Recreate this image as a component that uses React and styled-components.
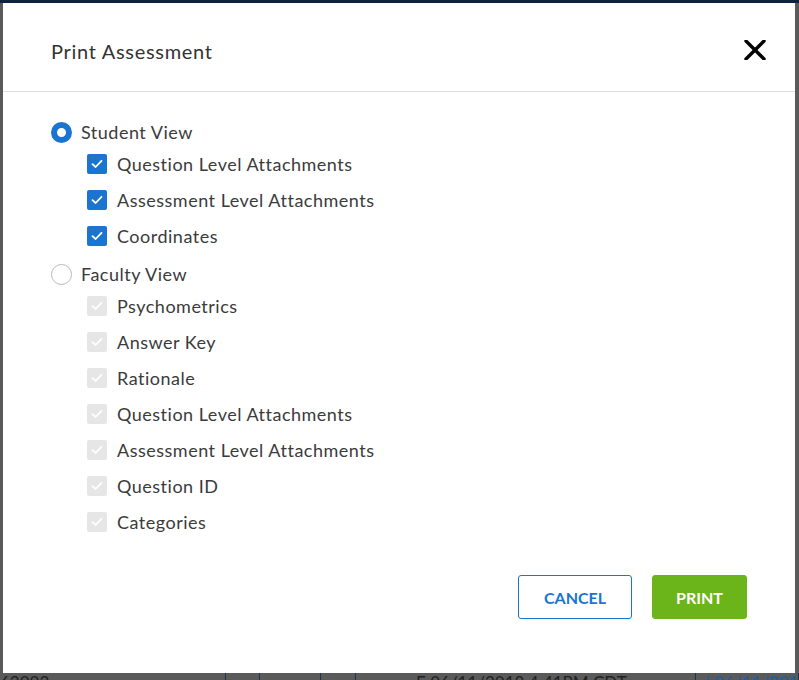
import styled, { createGlobalStyle } from "styled-components";

const GlobalStyle = createGlobalStyle`
  html, body {
    margin: 0;
    padding: 0;
    background: #5a5a5a;
  }
  body {
    font-family: "Lato", "Open Sans", sans-serif;
  }
`;

const Page = styled.div`
  width: 799px;
  height: 680px;
  position: relative;
  overflow: hidden;
  background: #5a5a5a;
  display: flex;
  flex-direction: column;
`;

const TopBar = styled.div`
  height: 3px;
  background: #0d2340;
`;

const TableRow = styled.div`
  margin-top: auto;
  height: 7px;
  display: flex;
  overflow: hidden;
`;

const Cell = styled.div`
  width: ${(p) => p.$width}px;
  box-sizing: border-box;
  border-right: 1px solid #1d3350;
  color: ${(p) => p.$color || "#222"};
  font-size: 17px;
  line-height: 18px;
  padding-top: 1px;
  padding-left: ${(p) => p.$pad || 0}px;
  white-space: nowrap;
  overflow: hidden;
`;

const Modal = styled.section`
  position: absolute;
  top: 3px;
  left: 3px;
  width: 792px;
  height: 670px;
  background: #fff;
  display: flex;
  flex-direction: column;
`;

const Header = styled.header`
  height: 88px;
  border-bottom: 1px solid #dedede;
  display: flex;
  align-items: center;
  justify-content: space-between;
  padding: 0 28px 0 48px;
`;

const Title = styled.h2`
  margin: 8px 0 0;
  font-size: 20px;
  font-weight: 400;
  letter-spacing: 0.7px;
  color: #333;
`;

const CloseButton = styled.button`
  all: unset;
  cursor: pointer;
  width: 24px;
  height: 24px;
  display: flex;
  align-items: center;
  justify-content: center;
  margin-top: 6px;
`;

const Body = styled.div`
  padding: 26px 48px 0;
  display: flex;
  flex-direction: column;
  gap: 6px;
`;

const Group = styled.div`
  display: flex;
  flex-direction: column;
`;

const RadioRow = styled.label`
  height: 28px;
  display: flex;
  align-items: center;
  gap: 9px;
  font-size: 18px;
  letter-spacing: 0.5px;
  color: #3b3b3b;
`;

const Radio = styled.span`
  box-sizing: border-box;
  width: 21px;
  height: 21px;
  border-radius: 50%;
  border: ${(p) => (p.$checked ? "6.5px solid #1b75d0" : "1px solid #b8b8b8")};
  background: #fff;
`;

const CheckRow = styled.label`
  height: 36px;
  display: flex;
  align-items: center;
  gap: 10px;
  padding-left: 36px;
  font-size: 18px;
  letter-spacing: 0.5px;
  color: #3b3b3b;
`;

const Box = styled.span`
  width: 20px;
  height: 20px;
  border-radius: 2px;
  background: ${(p) => (p.$disabled ? "#e6e6e6" : "#1b75d0")};
  display: flex;
  align-items: center;
  justify-content: center;
`;

const Footer = styled.footer`
  margin-top: 35px;
  padding: 0 48px;
  display: flex;
  justify-content: flex-end;
  gap: 20px;
`;

const Button = styled.button`
  all: unset;
  box-sizing: border-box;
  height: 44px;
  border-radius: 3px;
  display: flex;
  align-items: center;
  justify-content: center;
  font-family: "Lato", "Open Sans", sans-serif;
  font-size: 16px;
  font-weight: 700;
  cursor: pointer;
  width: ${(p) => p.$width}px;
  color: ${(p) => (p.$primary ? "#fff" : "#1b75d0")};
  background: ${(p) => (p.$primary ? "#6bb41a" : "#fff")};
  border: 1px solid ${(p) => (p.$primary ? "#6bb41a" : "#1b75d0")};
`;

const Check = () => (
  <svg width="12" height="10" viewBox="0 0 12 10">
    <polyline
      points="1.5,5.2 4.6,8 10.5,1.8"
      fill="none"
      stroke="#fff"
      strokeWidth="1.8"
      strokeLinecap="round"
      strokeLinejoin="round"
    />
  </svg>
);

const CheckItem = ({ label, disabled }) => (
  <CheckRow>
    <Box $disabled={disabled}>
      <Check />
    </Box>
    {label}
  </CheckRow>
);

const studentOptions = [
  "Question Level Attachments",
  "Assessment Level Attachments",
  "Coordinates",
];

const facultyOptions = [
  "Psychometrics",
  "Answer Key",
  "Rationale",
  "Question Level Attachments",
  "Assessment Level Attachments",
  "Question ID",
  "Categories",
];

export default function App() {
  return (
    <>
      <GlobalStyle />
      <Page>
        <TopBar />
        <TableRow>
          <Cell $width={226}>62002</Cell>
          <Cell $width={34} />
          <Cell $width={61} />
          <Cell $width={35} />
          <Cell $width={340} $pad={60}>
            E 06/11/2018 4:41PM CDT
          </Cell>
          <Cell $width={103} $pad={6} $color="#1b5fa8">
            / 06/11/2018
          </Cell>
        </TableRow>
        <Modal>
          <Header>
            <Title>Print Assessment</Title>
            <CloseButton aria-label="Close">
              <svg width="22" height="20" viewBox="0 0 22 20">
                <path
                  d="M2 1 L20 19 M20 1 L2 19"
                  stroke="#000"
                  strokeWidth="3.4"
                  strokeLinecap="round"
                />
              </svg>
            </CloseButton>
          </Header>
          <Body>
            <Group>
              <RadioRow>
                <Radio $checked />
                Student View
              </RadioRow>
              {studentOptions.map((o) => (
                <CheckItem key={o} label={o} />
              ))}
            </Group>
            <Group>
              <RadioRow>
                <Radio />
                Faculty View
              </RadioRow>
              {facultyOptions.map((o) => (
                <CheckItem key={o} label={o} disabled />
              ))}
            </Group>
          </Body>
          <Footer>
            <Button $width={114}>CANCEL</Button>
            <Button $width={95} $primary>
              PRINT
            </Button>
          </Footer>
        </Modal>
      </Page>
    </>
  );
}
